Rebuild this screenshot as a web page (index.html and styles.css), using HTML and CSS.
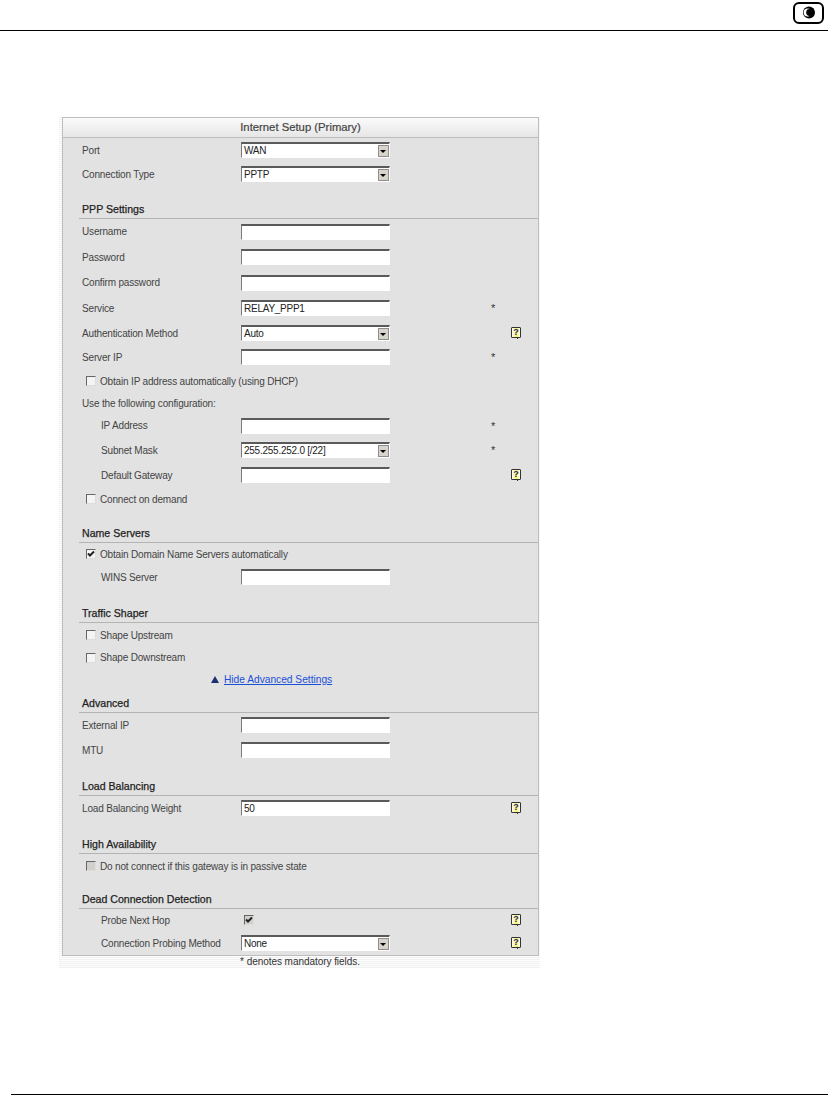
FILE: index.html
```html
<!DOCTYPE html>
<html lang="en">
<head>
<meta charset="utf-8">
<title>Internet Setup (Primary)</title>
<link rel="stylesheet" href="styles.css">
</head>
<body>
<header class="page-head">
  <svg class="logo" viewBox="0 0 31 22" width="31" height="22" aria-hidden="true">
    <rect x="1" y="1" width="29" height="20" rx="5" fill="#fff" stroke="#000" stroke-width="2"/>
    <circle cx="16" cy="10.5" r="6" fill="#000"/>
    <circle cx="14.6" cy="10.5" r="3.9" fill="#fff"/>
    <circle cx="16.6" cy="10.5" r="3.4" fill="#000"/>
  </svg>
</header>
<main class="sheet">
  <div class="frame">
  <section class="panel">
    <h1 class="panel-title">Internet Setup (Primary)</h1>

    <div class="row h24"><span class="label">Port</span><span class="select"><span class="val">WAN</span><i class="arrow"></i></span></div>
    <div class="row h24"><span class="label">Connection Type</span><span class="select"><span class="val">PPTP</span><i class="arrow"></i></span></div>

    <h2 class="sec h33">PPP Settings</h2>
    <div class="row h25"><span class="label">Username</span><span class="input"></span></div>
    <div class="row h26"><span class="label">Password</span><span class="input"></span></div>
    <div class="row h25"><span class="label">Confirm password</span><span class="input"></span></div>
    <div class="row h26"><span class="label">Service</span><span class="input"><span class="val">RELAY_PPP1</span></span><span class="star">*</span></div>
    <div class="row h24"><span class="label">Authentication Method</span><span class="select"><span class="val">Auto</span><i class="arrow"></i></span><span class="star"></span><span class="help">?</span></div>
    <div class="row h24"><span class="label">Server IP</span><span class="input"></span><span class="star">*</span></div>
    <div class="row h24 check-row"><span class="box"></span><span>Obtain IP address automatically (using DHCP)</span></div>
    <div class="row h21"><span class="label wide">Use the following configuration:</span></div>
    <div class="row h23 sub"><span class="label">IP Address</span><span class="input"></span><span class="star">*</span></div>
    <div class="row h26 sub"><span class="label">Subnet Mask</span><span class="select"><span class="val">255.255.252.0 [/22]</span><i class="arrow"></i></span><span class="star">*</span></div>
    <div class="row h24 sub"><span class="label">Default Gateway</span><span class="input"></span><span class="star"></span><span class="help">?</span></div>
    <div class="row h24 check-row"><span class="box"></span><span>Connect on demand</span></div>

    <h2 class="sec h32">Name Servers</h2>
    <div class="row h22 check-row"><span class="box on">
      <svg viewBox="0 0 8 8" width="8" height="8" aria-hidden="true"><path d="M1 3.5l2 2L7 1.5" fill="none" stroke="#222" stroke-width="2"/></svg>
    </span><span>Obtain Domain Name Servers automatically</span></div>
    <div class="row h24 sub"><span class="label">WINS Server</span><span class="input"></span></div>

    <h2 class="sec h34">Traffic Shaper</h2>
    <div class="row h24 check-row"><span class="box"></span><span>Shape Upstream</span></div>
    <div class="row h21 check-row"><span class="box"></span><span>Shape Downstream</span></div>
    <div class="row h22 toggle"><span class="tri"></span><a href="#" class="link">Hide Advanced Settings</a></div>

    <h2 class="sec h23">Advanced</h2>
    <div class="row h24"><span class="label">External IP</span><span class="input"></span></div>
    <div class="row h26"><span class="label">MTU</span><span class="input"></span></div>

    <h2 class="sec h33">Load Balancing</h2>
    <div class="row h24"><span class="label">Load Balancing Weight</span><span class="input"><span class="val">50</span></span><span class="star"></span><span class="help">?</span></div>

    <h2 class="sec h34">High Availability</h2>
    <div class="row h24 check-row"><span class="box off"></span><span>Do not connect if this gateway is in passive state</span></div>

    <h2 class="sec h31">Dead Connection Detection</h2>
    <div class="row h22 sub"><span class="label">Probe Next Hop</span><span class="probe"><span class="box on off">
      <svg viewBox="0 0 8 8" width="8" height="8" aria-hidden="true"><path d="M1 3.5l2 2L7 1.5" fill="none" stroke="#222" stroke-width="2"/></svg>
    </span></span><span class="star"></span><span class="help">?</span></div>
    <div class="row h24 sub"><span class="label">Connection Probing Method</span><span class="select"><span class="val">None</span><i class="arrow"></i></span><span class="star"></span><span class="help">?</span></div>
  </section>
  <p class="note">* denotes mandatory fields.</p>
  </div>
</main>
<footer class="page-foot"></footer>
</body>
</html>
```
FILE: styles.css
```css
html, body { margin: 0; padding: 0; background: #fff; }
body {
  width: 828px;
  height: 1095px;
  overflow: hidden;
  display: flex;
  flex-direction: column;
  font-family: "Liberation Sans", Arial, sans-serif;
  font-size: 10px;
  letter-spacing: -0.17px;
  color: #444;
}
.page-head {
  height: 28px;
  border-bottom: 1px solid #000;
  display: flex;
  justify-content: flex-end;
  align-items: flex-start;
  padding: 2px 4px 0 0;
  flex: none;
}
.logo { display: block; }
.sheet {
  flex: 1;
  padding: 86px 0 0 59px;
}
.frame {
  width: 481px;
  box-sizing: border-box;
  padding: 0 2px 0 3px;
  background: repeating-linear-gradient(#f1f1f1 0, #f1f1f1 1px, #fdfdfd 1px, #fdfdfd 2px);
}
.panel {
  width: 475px;
  background: #e2e2e2;
  border: 1px solid #bdbdbd;
}
.panel-title {
  margin: 0;
  height: 20px;
  line-height: 19px;
  box-sizing: border-box;
  font-size: 11.3px;
  letter-spacing: 0;
  font-weight: normal;
  text-align: center;
  color: #444;
  -webkit-text-stroke: 0.2px #444;
  background: linear-gradient(#fbfbfb, #e6e6e6);
  border-bottom: 1px solid #bdbdbd;
}
.row {
  display: flex;
  align-items: center;
  padding-left: 19px;
  box-sizing: border-box;
}
.h21 { height: 21px; }
.h22 { height: 22px; }
.h23 { height: 23px; }
.h24 { height: 24px; }
.h25 { height: 25px; }
.h26 { height: 26px; }
.h31 { height: 31px; }
.h32 { height: 32px; }
.h33 { height: 33px; }
.h34 { height: 34px; }
.label { width: 159px; flex: none; }
.label.wide { width: auto; }
.sub { padding-left: 38px; }
.sub .label { width: 140px; }
.sec {
  margin: 0 0 0 16px;
  padding: 0 0 3px 3px;
  box-sizing: border-box;
  display: flex;
  align-items: flex-end;
  font-size: 10.6px;
  letter-spacing: 0;
  font-weight: normal;
  color: #222;
  -webkit-text-stroke: 0.25px #222;
  border-bottom: 1px solid #b4b4b4;
}
.input, .select {
  width: 149px;
  height: 16px;
  flex: none;
  box-sizing: border-box;
  display: flex;
  align-items: center;
  background: #fff;
  border: 1px solid #fff;
  border-top: 2px solid #5a5a5a;
  border-left: 1px solid #7a7a7a;
  padding-left: 2px;
  letter-spacing: -0.25px;
  color: #222;
}
.val { flex: 1; }
.arrow {
  display: block;
  width: 11px;
  height: 12px;
  background: #d8d4cc;
  border: 1px solid #8d8d8d;
  box-sizing: border-box;
  position: relative;
}
.arrow::after {
  content: "";
  position: absolute;
  left: 1px;
  top: 4px;
  border-left: 3px solid transparent;
  border-right: 3px solid transparent;
  border-top: 3px solid #000;
}
.star {
  width: 121px;
  flex: none;
  padding-left: 101px;
  box-sizing: border-box;
  font-size: 11px;
  color: #333;
}
.help {
  width: 10px;
  height: 11px;
  margin-top: -2px;
  flex: none;
  box-sizing: border-box;
  border: 1px solid #333;
  border-radius: 1px;
  background: linear-gradient(90deg, #fff, #f6ee60 55%, #fff);
  display: flex;
  align-items: center;
  justify-content: center;
  font-size: 9px;
  font-weight: bold;
  color: #1c2a6e;
  line-height: 1;
  position: relative;
}
.help::after {
  content: "";
  position: absolute;
  left: 5px;
  top: 9px;
  width: 1px;
  height: 2px;
  background: #333;
}
.check-row { padding-left: 23px; gap: 4px; }
.box {
  width: 8px;
  height: 8px;
  flex: none;
  background: #f4f4f4;
  border: 1px solid #666;
  border-right-color: #ddd;
  border-bottom-color: #ddd;
  display: block;
}
.box svg { display: block; }
.box.off { background: #d2d0cb; }
.probe { width: 149px; flex: none; display: flex; padding-left: 3px; box-sizing: border-box; }
.toggle { padding-left: 148px; gap: 5px; }
.tri {
  border-left: 4px solid transparent;
  border-right: 4px solid transparent;
  border-bottom: 7px solid #1c2f6e;
  display: block;
}
.link { font-size: 10.2px; letter-spacing: 0; color: #1a4fd8; text-decoration: underline; }
.note {
  margin: 0;
  height: 12px;
  line-height: 11px;
  text-align: center;
  font-size: 10px;
  letter-spacing: -0.05px;
  color: #333;
}
.page-foot {
  flex: none;
  margin: 0 0 0 11px;
  height: 1px;
  background: #000;
}
```
